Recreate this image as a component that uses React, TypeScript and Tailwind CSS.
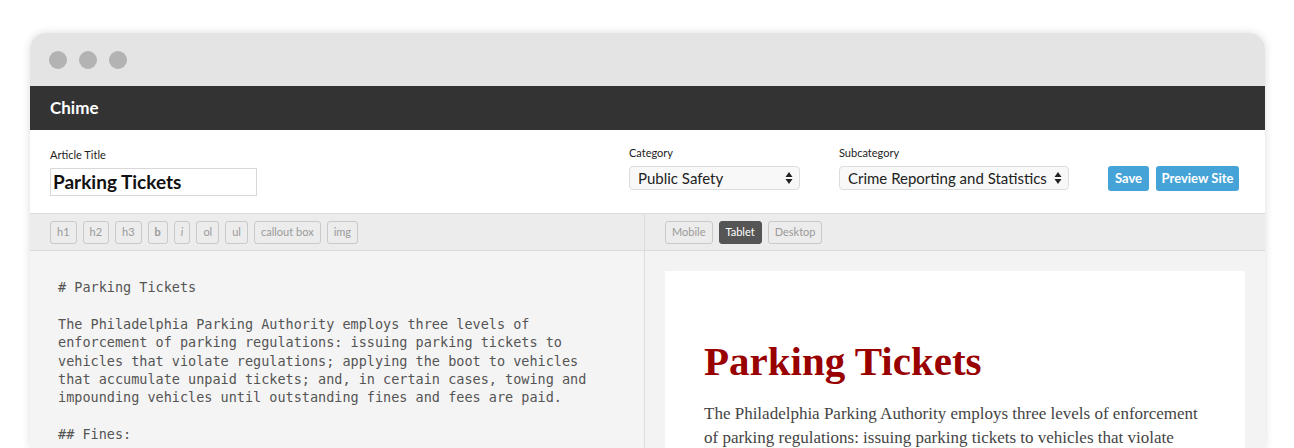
import React from "react";

const ui = { fontFamily: "Lato, 'Open Sans', 'Liberation Sans', sans-serif" };
const mono = { fontFamily: "'DejaVu Sans Mono', 'Liberation Mono', monospace" };
const serif = { fontFamily: "'Liberation Serif', 'DejaVu Serif', serif" };

function ToolBtn({ label, italic, bold }: { label: string; italic?: boolean; bold?: boolean }) {
  return (
    <div
      className={`h-[23px] px-[6px] flex items-center border border-[#c9c9c9] rounded-[3px] text-[11px] text-[#9a9a9a] ${italic ? "italic" : ""} ${bold ? "font-bold" : ""}`}
    >
      {label}
    </div>
  );
}

function Arrows() {
  return (
    <svg width="8" height="14" viewBox="0 0 8 14" className="shrink-0">
      <path d="M4 1 L7.5 6 L0.5 6 Z" fill="#222" />
      <path d="M4 13 L7.5 8 L0.5 8 Z" fill="#222" />
    </svg>
  );
}

const editorText = `# Parking Tickets

The Philadelphia Parking Authority employs three levels of
enforcement of parking regulations: issuing parking tickets to
vehicles that violate regulations; applying the boot to vehicles
that accumulate unpaid tickets; and, in certain cases, towing and
impounding vehicles until outstanding fines and fees are paid.

## Fines:`;

export default function App() {
  return (
    <div className="w-[1294px] h-[448px] bg-white overflow-hidden pt-[33px] pl-[30px]" style={ui}>
      <div className="w-[1235px] h-[415px] bg-white rounded-t-[16px] overflow-hidden shadow-[0_0_9px_rgba(0,0,0,0.14)] flex flex-col">
        {/* title bar */}
        <div className="h-[53px] bg-[#e4e4e4] flex items-center gap-[12px] pl-[19px] shrink-0">
          <div className="w-[18px] h-[18px] rounded-full bg-[#b3b3b3]" />
          <div className="w-[18px] h-[18px] rounded-full bg-[#b3b3b3]" />
          <div className="w-[18px] h-[18px] rounded-full bg-[#b3b3b3]" />
        </div>
        {/* header */}
        <div className="h-[44px] bg-[#333333] flex items-center px-[20px] shrink-0">
          <span className="text-white font-bold text-[17px]">Chime</span>
        </div>
        {/* form */}
        <div className="h-[83px] flex items-start pl-[20px] pr-[26px] shrink-0 bg-white">
          <div className="flex-1 pt-[18px]">
            <div className="text-[11px] leading-[14px] text-[#222]">Article Title</div>
            <div className="mt-[6px] w-[207px] h-[28px] border border-[#d8d8d8] flex items-center px-[2px]">
              <span className="text-[19px] font-bold text-[#111]">Parking Tickets</span>
            </div>
          </div>
          <div className="w-[171px] pt-[16px]">
            <div className="text-[11px] leading-[14px] text-[#222]">Category</div>
            <div className="mt-[6px] h-[24px] border border-[#dcdcdc] rounded-[4px] bg-[#f8f8f8] flex items-center justify-between pl-[8px] pr-[6px]">
              <span className="text-[15px] text-[#222]">Public Safety</span>
              <Arrows />
            </div>
          </div>
          <div className="w-[230px] ml-[39px] pt-[16px]">
            <div className="text-[11px] leading-[14px] text-[#222]">Subcategory</div>
            <div className="mt-[6px] h-[24px] border border-[#dcdcdc] rounded-[4px] bg-[#f8f8f8] flex items-center justify-between pl-[8px] pr-[6px]">
              <span className="text-[15px] text-[#222]">Crime Reporting and Statistics</span>
              <Arrows />
            </div>
          </div>
          <div className="ml-[39px] pt-[36px] flex gap-[7px]">
            <div className="h-[25px] w-[41px] rounded-[3px] bg-[#46a3d7] text-white text-[13px] font-bold flex items-center justify-center">
              Save
            </div>
            <div className="h-[25px] w-[83px] rounded-[3px] bg-[#46a3d7] text-white text-[13px] font-bold flex items-center justify-center">
              Preview Site
            </div>
          </div>
        </div>
        {/* panes */}
        <div className="flex flex-1 border-t border-[#dcdcdc]">
          <div className="w-[615px] border-r border-[#dcdcdc] flex flex-col">
            <div className="h-[37px] bg-[#ececec] border-b border-[#dcdcdc] flex items-center gap-[6px] px-[20px] shrink-0">
              <ToolBtn label="h1" />
              <ToolBtn label="h2" />
              <ToolBtn label="h3" />
              <ToolBtn label="b" bold />
              <ToolBtn label="i" italic />
              <ToolBtn label="ol" />
              <ToolBtn label="ul" />
              <ToolBtn label="callout box" />
              <ToolBtn label="img" />
            </div>
            <div className="flex-1 bg-[#f4f4f4] pl-[28px] pt-[27px]">
              <pre className="text-[13.5px] leading-[18.4px] text-[#555] whitespace-pre" style={mono}>
                {editorText}
              </pre>
            </div>
          </div>
          <div className="flex-1 flex flex-col">
            <div className="h-[37px] bg-[#ececec] border-b border-[#dcdcdc] flex items-center gap-[6px] px-[20px] shrink-0">
              <div className="h-[23px] px-[6px] flex items-center border border-[#c9c9c9] rounded-[3px] text-[11px] text-[#9a9a9a]">
                Mobile
              </div>
              <div className="h-[23px] px-[6px] flex items-center border border-[#555] bg-[#555] rounded-[3px] text-[11px] text-white">
                Tablet
              </div>
              <div className="h-[23px] px-[6px] flex items-center border border-[#c9c9c9] rounded-[3px] text-[11px] text-[#9a9a9a]">
                Desktop
              </div>
            </div>
            <div className="flex-1 bg-[#f3f3f3] pt-[20px] px-[20px]">
              <div className="bg-white h-full pl-[39px] pr-[30px] pt-[66px]" style={serif}>
                <h1 className="text-[41px] leading-[48px] font-bold text-[#990000]">Parking Tickets</h1>
                <p className="mt-[17px] text-[17px] leading-[24px] text-[#444]">
                  <span className="block whitespace-nowrap">
                    The Philadelphia Parking Authority employs three levels of enforcement
                  </span>
                  <span className="block whitespace-nowrap">
                    of parking regulations: issuing parking tickets to vehicles that violate
                  </span>
                </p>
              </div>
            </div>
          </div>
        </div>
      </div>
    </div>
  );
}
